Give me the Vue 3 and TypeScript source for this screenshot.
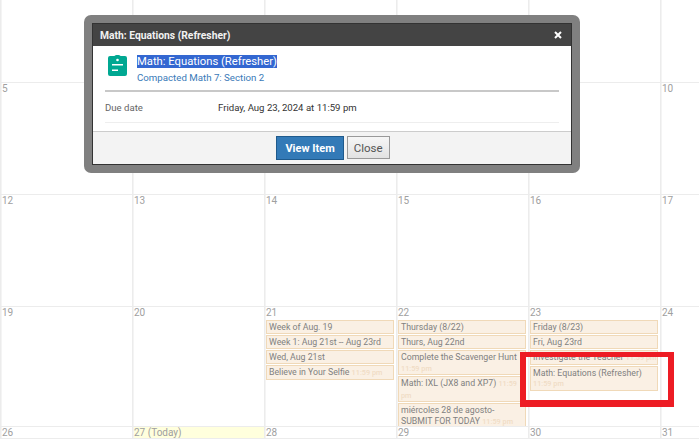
<template>
  <div class="page">
    <div class="calendar">
      <div v-for="cell in cells" :key="cell.label" class="cell" :class="{ today: cell.today }">
        <div class="day">{{ cell.label }}</div>
        <div v-for="ev in cell.events" :key="ev.title" class="event">
          {{ ev.title }} <span v-if="ev.time" class="time">{{ ev.time }}</span>
        </div>
      </div>
    </div>

    <div class="highlight"></div>

    <div class="dialog-frame">
      <div class="dialog">
        <div class="titlebar">
          <span>Math: Equations (Refresher)</span>
          <svg class="close-x" width="8" height="8" viewBox="0 0 8 8">
            <path d="M1 1l6 6M7 1l-6 6" stroke="#fff" stroke-width="2" />
          </svg>
        </div>
        <div class="content">
          <div class="head">
            <svg class="icon" width="19" height="21" viewBox="0 0 19 21">
              <path d="M2 1h4.500C7 .3 8 0 9.500 0S12 .3 12.500 1H17a2 2 0 0 1 2 2v16a2 2 0 0 1-2 2H2a2 2 0 0 1-2-2V3a2 2 0 0 1 2-2z" fill="#00a892" />
              <circle cx="9.500" cy="5" r="1.300" fill="#fff" />
              <rect x="4" y="9" width="11" height="1.500" fill="#fff" />
              <rect x="4" y="14.500" width="6" height="1.500" fill="#fff" />
            </svg>
            <div>
              <div class="title"><span class="selected">Math: Equations (Refresher)</span></div>
              <a class="course">Compacted Math 7: Section 2</a>
            </div>
          </div>
          <div class="due">
            <span class="due-label">Due date</span>
            <span>Friday, Aug 23, 2024 at 11:59 pm</span>
          </div>
        </div>
        <div class="footer">
          <button class="btn primary">View Item</button>
          <button class="btn">Close</button>
        </div>
      </div>
    </div>
  </div>
</template>

<script setup lang="ts">
interface CalEvent {
  title: string;
  time?: string;
}

interface Cell {
  label: string;
  today?: boolean;
  events?: CalEvent[];
}

const due = "11:59 pm";

const cells: Cell[] = [
  { label: "" }, { label: " " }, { label: "  " }, { label: "   " }, { label: "    " }, { label: "     " },
  { label: "5" }, { label: "6" }, { label: "7" }, { label: "8" }, { label: "9" }, { label: "10" },
  { label: "12" }, { label: "13" }, { label: "14" }, { label: "15" }, { label: "16" }, { label: "17" },
  { label: "19" },
  { label: "20" },
  {
    label: "21",
    events: [
      { title: "Week of Aug. 19" },
      { title: "Week 1: Aug 21st -- Aug 23rd" },
      { title: "Wed, Aug 21st" },
      { title: "Believe in Your Selfie", time: due },
    ],
  },
  {
    label: "22",
    events: [
      { title: "Thursday (8/22)" },
      { title: "Thurs, Aug 22nd" },
      { title: "Complete the Scavenger Hunt", time: due },
      { title: "Math: IXL (JX8 and XP7)", time: due },
      { title: "miércoles 28 de agosto- SUBMIT FOR TODAY", time: due },
    ],
  },
  {
    label: "23",
    events: [
      { title: "Friday (8/23)" },
      { title: "Fri, Aug 23rd" },
      { title: "Investigate the Teacher", time: due },
      { title: "Math: Equations (Refresher)", time: due },
    ],
  },
  { label: "24" },
  { label: "26" },
  { label: "27 (Today)", today: true },
  { label: "28" }, { label: "29" }, { label: "30" }, { label: "31" },
];
</script>

<style>
html, body {
  margin: 0;
  overflow: hidden;
  background: #fff;
}
</style>

<style scoped>
.page {
  position: relative;
  width: 699px;
  height: 439px;
  overflow: hidden;
  font-family: Roboto, "Liberation Sans", sans-serif;
  font-size: 10px;
}

.calendar {
  display: grid;
  grid-template-columns: repeat(6, 132px);
  grid-template-rows: 83px 112px 112px 120px 12px;
}

.cell {
  box-sizing: border-box;
  border-left: 1px solid #ececec;
  border-bottom: 1px solid #ececec;
  box-shadow: inset 1px 0 0 #f4f4f4;
  padding: 0 1px;
  min-width: 0;
  overflow: hidden;
}

.cell.today {
  background: #ffffdd;
}

.day {
  color: #a0a0a0;
  font-size: 10px;
  height: 12px;
  line-height: 12px;
  margin-bottom: 1px;
}

.event {
  box-sizing: border-box;
  width: 128px;
  margin-bottom: 1px;
  padding: 1px 0 0 2px;
  min-height: 14px;
  border: 1px solid #f0d9b8;
  background: #faf0e4;
  color: #808080;
  font-size: 8.750px;
  line-height: 10.500px;
}

.time {
  color: #f0dcc4;
  font-size: 7.300px;
  font-weight: 500;
}

.highlight {
  position: absolute;
  left: 520px;
  top: 352px;
  width: 154px;
  height: 55px;
  box-sizing: border-box;
  border: 6px solid #ed1c24;
  border-top-width: 5px;
  border-bottom-width: 7px;
}

.dialog-frame {
  position: absolute;
  left: 84px;
  top: 15px;
  width: 496px;
  height: 158px;
  box-sizing: border-box;
  padding: 8px;
  background: #808080;
  border-radius: 7px;
}

.dialog {
  height: 142px;
  box-sizing: border-box;
  display: flex;
  flex-direction: column;
  background: #fff;
  border: 1px solid #333;
  color: #444;
}

.titlebar {
  height: 22px;
  flex: none;
  display: flex;
  justify-content: space-between;
  align-items: center;
  padding: 0 8px 0 7px;
  background: #444;
  color: #f2f2f2;
  font-size: 10.300px;
  font-weight: 700;
}

.close-x {
  margin-right: 1px;
}

.content {
  flex: 1;
  padding: 0 12px;
}

.head {
  display: flex;
  gap: 10px;
  height: 46px;
  box-sizing: border-box;
  padding: 9px 0 0 3px;
  border-bottom: 2px solid #c8c8c8;
}

.title {
  margin-top: -1px;
  font-size: 11.250px;
  line-height: 15px;
  color: #fff;
}

.selected {
  background: #3367d1;
}

.course {
  display: block;
  margin-top: 3px;
  font-size: 9.700px;
  line-height: 12px;
  color: #3a7ab8;
}

.due {
  display: flex;
  height: 31px;
  box-sizing: border-box;
  align-items: center;
  border-bottom: 1px solid #eee;
  font-size: 9.600px;
  color: #333;
}

.due-label {
  width: 113px;
  color: #666;
}

.footer {
  flex: none;
  height: 33px;
  box-sizing: border-box;
  display: flex;
  justify-content: center;
  align-items: flex-start;
  gap: 3px;
  padding: 4px 0 0 2px;
  background: #f3f3f3;
  border-top: 1px solid #ccc;
}

.btn {
  height: 23px;
  padding: 0 6px;
  border: 1px solid #999;
  background: linear-gradient(#f6f6f6, #e2e2e2);
  color: #555;
  font-family: Roboto, "Liberation Sans", sans-serif;
  font-size: 11.500px;
}

.btn.primary {
  height: 24px;
  padding: 0 8px;
  border-color: #1f5a8c;
  background: #337ab7;
  color: #fff;
  font-size: 11px;
  font-weight: 700;
}
</style>
